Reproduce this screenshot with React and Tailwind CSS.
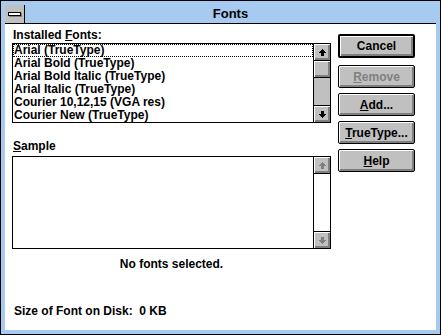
import React from 'react';

const FONTS = [
  'Arial (TrueType)',
  'Arial Bold (TrueType)',
  'Arial Bold Italic (TrueType)',
  'Arial Italic (TrueType)',
  'Courier 10,12,15 (VGA res)',
  'Courier New (TrueType)',
];

const bevel =
  'bg-[#c0c0c0] shadow-[inset_1px_1px_0_#ffffff,inset_-1px_-1px_0_#808080,inset_-2px_-2px_0_#808080]';

function Arrow({ up = true, disabled = false }) {
  const fill = disabled ? '#808080' : '#000000';
  return (
    <svg width="7" height="7" viewBox="0 0 7 7" shapeRendering="crispEdges" className={up ? '' : 'rotate-180'}>
      {disabled ? <path d="M4 1h1v1h1v1h1v1h-2v3h-3v-1h2v-3h2z" fill="#ffffff" /> : null}
      <path d="M3 0h1v1h1v1h1v1h1v1h-2v3h-3v-3h-2v-1h1v-1h1v-1h1z" fill={fill} />
    </svg>
  );
}

function ScrollButton({ up, disabled, className = '' }) {
  return (
    <div className={`flex items-center justify-center ${bevel} ${className}`}>
      <Arrow up={up} disabled={disabled} />
    </div>
  );
}

function Mn({ children }) {
  return <span className="underline decoration-1 underline-offset-[1px]">{children}</span>;
}

function Button({ children, isDefault, disabled, className = '' }) {
  return (
    <div
      className={`w-[77px] flex items-center justify-center rounded-[2px] border-black ${bevel} ${
        isDefault ? 'h-[24px] border-2' : 'h-[23px] border'
      } ${disabled ? 'text-[#808080]' : 'text-black'} ${className}`}
    >
      <span>{children}</span>
    </div>
  );
}

export default function App() {
  return (
    <div className="w-[441px] h-[335px] border border-black bg-[#a6caf0] p-[4px] font-['Liberation_Sans',Arial,sans-serif] text-[12px] font-bold leading-[14px] text-black">
      <div className="h-full flex flex-col bg-white">
        <div className="h-[19px] flex border-b border-black bg-[#a6caf0]">
          <div className="w-[20px] border-r border-black bg-[#c0c0c0] flex items-center justify-center">
            <div className="w-[13px] h-[4px] border border-black bg-white shadow-[1px_1px_0_#808080]" />
          </div>
          <div className="flex-1 text-center text-[13px] leading-[18px]">Fonts</div>
        </div>

        <div className="flex-1 flex">
          <div className="ml-[7px] w-[319px] flex flex-col pt-[4px]">
            <div className="pl-[1px]">
              Installed <Mn>F</Mn>onts:
            </div>
            <div className="mt-[1px] h-[80px] border border-black flex">
              <div className="flex-1 flex flex-col">
                {FONTS.map((name, i) => (
                  <div
                    key={name}
                    className={`h-[13px] leading-[13px] pl-[1px] whitespace-nowrap ${
                      i === 0 ? 'outline-1 outline-dotted outline-black outline-offset-[-1px]' : ''
                    }`}
                  >
                    {name}
                  </div>
                ))}
              </div>
              <div className="w-[17px] border-l border-black flex flex-col">
                <ScrollButton up className="border-b border-black h-[17px]" />
                <div className={`h-[17px] border-b border-black ${bevel}`} />
                <div className="flex-1 bg-[#c0c0c0]" />
                <ScrollButton up={false} className="border-t border-black h-[17px]" />
              </div>
            </div>

            <div className="mt-[16px] pl-[1px]">
              <Mn>S</Mn>ample
            </div>
            <div className="mt-[3px] h-[93px] border border-black flex">
              <div className="flex-1" />
              <div className="w-[17px] border-l border-black flex flex-col">
                <ScrollButton up disabled className="border-b border-black h-[17px]" />
                <div className="flex-1 bg-white" />
                <ScrollButton up={false} disabled className="border-t border-black h-[17px]" />
              </div>
            </div>

            <div className="mt-[8px] text-center">No fonts selected.</div>

            <div className="mt-[33px] pl-[2px] whitespace-pre">Size of Font on Disk:  0 KB</div>
          </div>

          <div className="ml-[7px] flex flex-col pt-[10px]">
            <Button isDefault>Cancel</Button>
            <Button disabled className="mt-[7px]">
              <Mn>R</Mn>emove
            </Button>
            <Button className="mt-[5px]">
              <Mn>A</Mn>dd...
            </Button>
            <Button className="mt-[5px]">
              <Mn>T</Mn>rueType...
            </Button>
            <Button className="mt-[5px]">
              <Mn>H</Mn>elp
            </Button>
          </div>
        </div>
      </div>
    </div>
  );
}
